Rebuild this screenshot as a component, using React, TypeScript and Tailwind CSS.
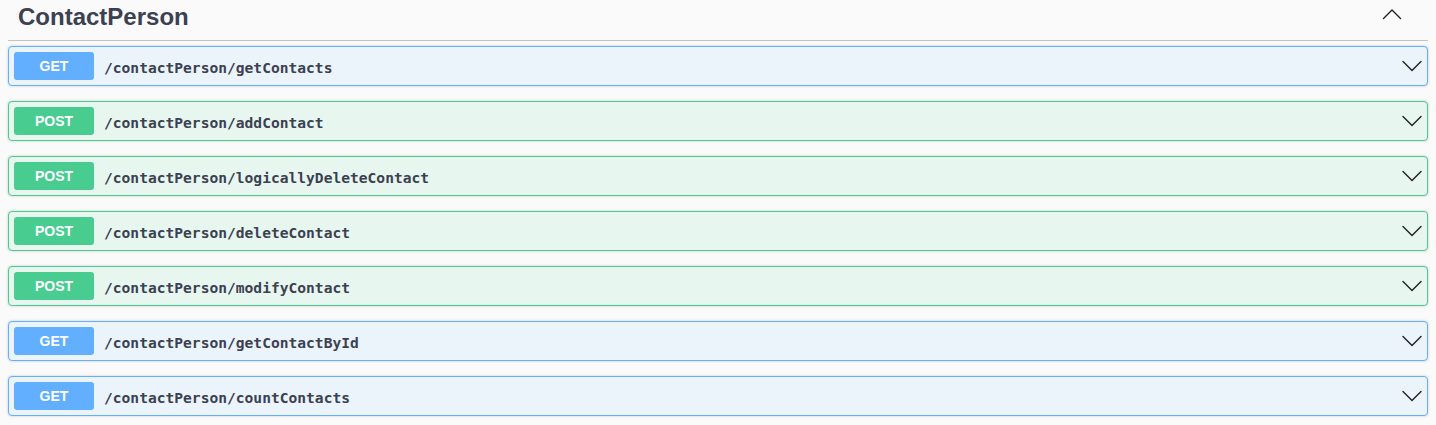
import React from 'react';

type Method = 'GET' | 'POST';

interface Operation {
  method: Method;
  path: string;
}

const operations: Operation[] = [
  { method: 'GET', path: '/contactPerson/getContacts' },
  { method: 'POST', path: '/contactPerson/addContact' },
  { method: 'POST', path: '/contactPerson/logicallyDeleteContact' },
  { method: 'POST', path: '/contactPerson/deleteContact' },
  { method: 'POST', path: '/contactPerson/modifyContact' },
  { method: 'GET', path: '/contactPerson/getContactById' },
  { method: 'GET', path: '/contactPerson/countContacts' },
];

const styles: Record<Method, { row: string; badge: string }> = {
  GET: {
    row: 'bg-[#ebf3fb] border-[#61affe]',
    badge: 'bg-[#61affe]',
  },
  POST: {
    row: 'bg-[#e8f6f0] border-[#49cc90]',
    badge: 'bg-[#49cc90]',
  },
};

function Chevron({ up = false }: { up?: boolean }) {
  return (
    <svg width="20" height="20" viewBox="0 0 20 20" className="shrink-0">
      <polyline
        points={up ? '1.5,14.5 10,6 18.5,14.5' : '1,5.5 10,14.5 19,5.5'}
        fill="none"
        stroke="#1f1f1f"
        strokeWidth="1.4"
        strokeLinecap="round"
        strokeLinejoin="round"
      />
    </svg>
  );
}

export default function App() {
  return (
    <div className="min-h-screen bg-[#fafafa] px-2 text-[#3b4151]" style={{ fontFamily: '"Liberation Sans", Arial, sans-serif' }}>
      {/* Tag header */}
      <div className="flex items-start h-[41px] pt-[2px] pl-[10px] mb-[5px] border-b border-[#3b4151]/30">
        <h3 className="text-[24px] leading-[30px] font-bold">ContactPerson</h3>
        <div className="flex-1" />
        <div className="mt-[2px] mr-[26px]">
          <Chevron up />
        </div>
      </div>

      {/* Operations */}
      {operations.map((op) => (
        <div
          key={op.path}
          className={`mb-[15px] border rounded-[4px] shadow-[0_0_3px_rgba(0,0,0,0.19)] ${styles[op.method].row}`}
        >
          <div className="flex items-center p-[5px]">
            <span
              className={`w-[80px] py-[6px] rounded-[3px] text-center text-white text-[14px] leading-[16px] font-bold ${styles[op.method].badge}`}
            >
              {op.method}
            </span>
            <span
              className="flex-1 px-[10px] pt-[3px] text-[14.6px] font-bold text-[#3b4151]"
              style={{ fontFamily: '"DejaVu Sans Mono", monospace' }}
            >
              {op.path}
            </span>
            <Chevron />
          </div>
        </div>
      ))}
    </div>
  );
}
